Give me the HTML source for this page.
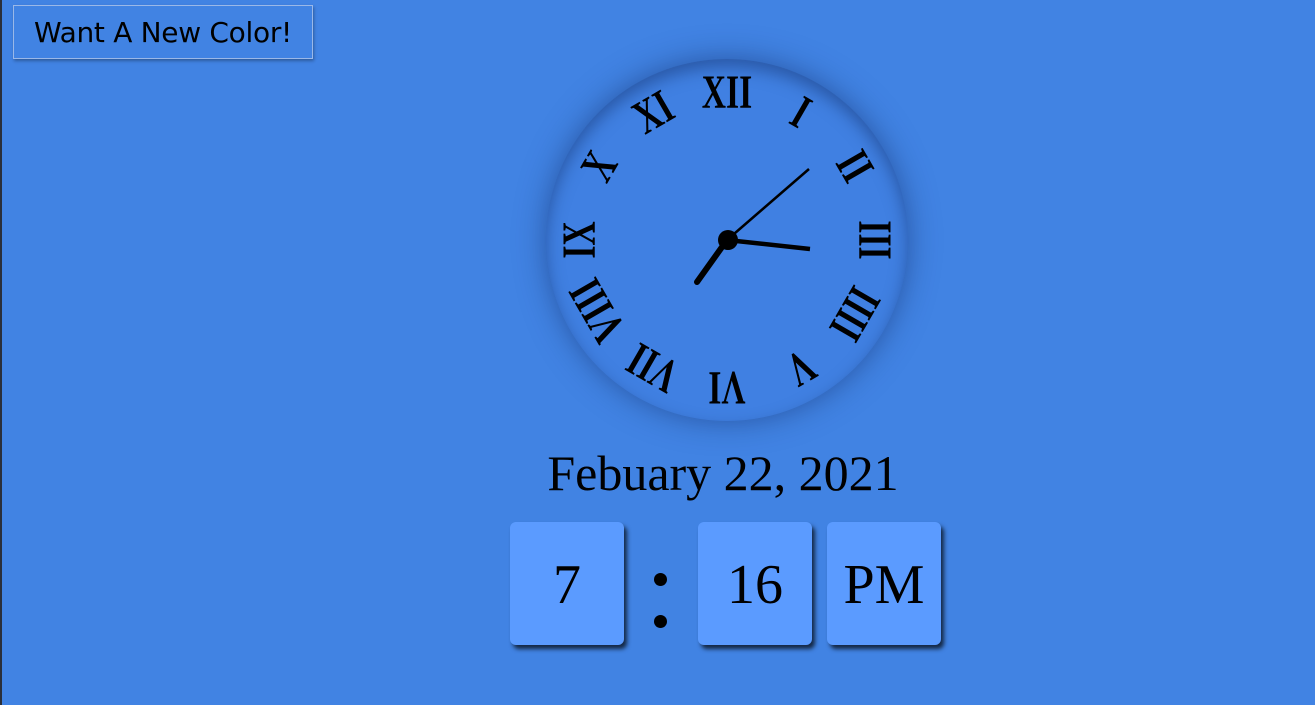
<!DOCTYPE html>
<html><head><style>
html,body{margin:0;padding:0}
body{width:1315px;height:705px;background:#4183e3;position:relative;overflow:hidden;font-family:"Liberation Serif",serif;}
.edge{position:absolute;left:0;top:0;width:2px;height:705px;background:#2a2f3a}
.btn{position:absolute;left:13px;top:5px;width:300px;height:54px;border:1px solid #9ab8e8;box-sizing:border-box;background:#4183e3;box-shadow:1px 2px 3px rgba(0,0,0,.3);font-family:"DejaVu Sans","Liberation Sans",sans-serif;font-size:28px;line-height:54px;text-align:center;color:#000;letter-spacing:-0.3px}
.clock{position:absolute;left:546px;top:59px;width:362px;height:362px;border-radius:50%;background:#4080e2;box-shadow:0 0 30px rgba(20,50,110,.55), inset 0 8px 16px rgba(20,50,110,.5);}
.num{position:absolute;left:181px;top:181px;width:0;height:0}
.num span{position:absolute;left:-40px;top:-168px;width:80px;text-align:center;font-size:48px;font-weight:bold;line-height:42px;transform:scaleX(.7);}
.date{position:absolute;left:0;top:443px;text-align:center;font-size:50px;line-height:60px}
.box{position:absolute;top:522px;width:114px;height:123px;background:#5b9bff;border-radius:6px;box-shadow:3px 4px 4px rgba(0,0,0,.7);font-size:56px;text-align:center;line-height:126px}
.dot{position:absolute;left:654px;width:13px;height:13px;border-radius:50%;background:#000}
</style></head><body>
<div class="edge"></div>
<div class="btn">Want A New Color!</div>
<div class="clock">
<div class="num" style="transform:rotate(0deg)"><span>XII</span></div>
<div class="num" style="transform:rotate(30deg)"><span>I</span></div>
<div class="num" style="transform:rotate(60deg)"><span>II</span></div>
<div class="num" style="transform:rotate(90deg)"><span>III</span></div>
<div class="num" style="transform:rotate(120deg)"><span>IIII</span></div>
<div class="num" style="transform:rotate(150deg)"><span>V</span></div>
<div class="num" style="transform:rotate(180deg)"><span>VI</span></div>
<div class="num" style="transform:rotate(210deg)"><span>VII</span></div>
<div class="num" style="transform:rotate(240deg)"><span>VIII</span></div>
<div class="num" style="transform:rotate(270deg)"><span>IX</span></div>
<div class="num" style="transform:rotate(300deg)"><span>X</span></div>
<div class="num" style="transform:rotate(330deg)"><span>XI</span></div>
</div>
<svg style="position:absolute;left:0;top:0" width="1315" height="705">
<line x1="727" y1="240" x2="697" y2="282" stroke="#000" stroke-width="6" stroke-linecap="round"/>
<line x1="727" y1="240" x2="809" y2="169" stroke="#000" stroke-width="2.5"/>
<line x1="727" y1="240" x2="810" y2="249" stroke="#000" stroke-width="4.5"/>
<circle cx="728" cy="240" r="10" fill="#000"/>
</svg>
<div class="date" style="width:1446px">Febuary 22, 2021</div>
<div class="box" style="left:510px">7</div>
<div class="dot" style="top:573px"></div>
<div class="dot" style="top:615px"></div>
<div class="box" style="left:698px">16</div>
<div class="box" style="left:827px">PM</div>
</body></html>
